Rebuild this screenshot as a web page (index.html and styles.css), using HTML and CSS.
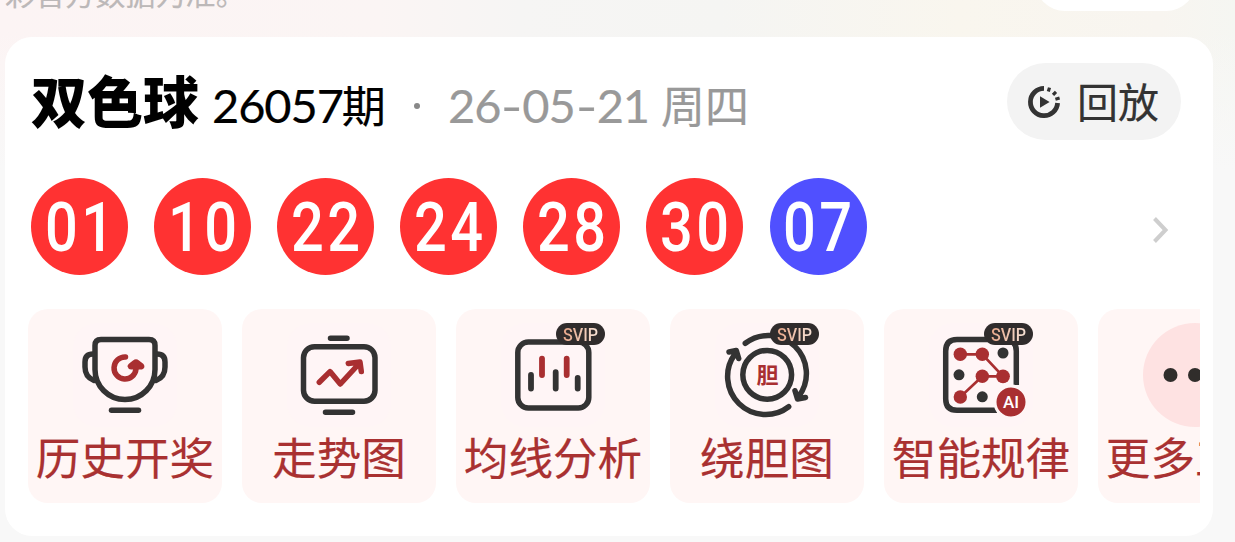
FILE: index.html
```html
<!DOCTYPE html>
<html lang="zh-CN">
<head>
<meta charset="utf-8">
<title>双色球</title>
<link rel="stylesheet" href="styles.css">
</head>
<body>
<div class="page">
  <header class="notice">
    <span class="notice-text">彩官方数据为准。</span>
    <span class="notice-pill"></span>
  </header>
  <main class="card">
    <div class="head">
      <h1 class="title">双色球</h1>
      <span class="issue"><span class="num">26057</span>期</span>
      <span class="dot"></span>
      <span class="date"><span class="num">26<i class="dash">-</i>05<i class="dash">-</i>21</span><span class="week">周四</span></span>
      <button class="replay">
        <svg class="replay-icon" viewBox="0 0 34 34" width="34" height="34">
          <path d="M17 3.400A13.600 13.600 0 1 0 30.600 18" fill="none" stroke="#333" stroke-width="4.800"/>
          <path d="M21.300 6.500 22.500 2.600M26 9.800 29 6.800M28.400 14.200 32.600 13" stroke="#333" stroke-width="3.200"/>
          <path d="M13 11.200v11.600L22.600 17z" fill="#333"/>
        </svg>
        <span class="replay-text">回放</span>
      </button>
    </div>
    <div class="draw">
      <span class="ball"><b>01</b></span>
      <span class="ball"><b>10</b></span>
      <span class="ball"><b>22</b></span>
      <span class="ball"><b>24</b></span>
      <span class="ball"><b>28</b></span>
      <span class="ball"><b>30</b></span>
      <span class="ball blue"><b>07</b></span>
      <svg class="chevron" viewBox="0 0 20 30" width="20" height="30"><path d="M3.500 3.500 14.500 15 3.500 26.500" fill="none" stroke="#cecece" stroke-width="4"/></svg>
    </div>
    <nav class="tiles">
      <a class="tile">
        <svg class="icon" viewBox="0 0 104 104">
          <g class="ink">
            <path d="M28 16.500h48q6 0 6 6V46.500a30 30 0 0 1-60 0V22.500q0-6 6-6z"/>
            <path d="M21 31h-1q-8 0-8 8v5q0 10 9 13.500M83 31h1q8 0 8 8v5q0 10-9 13.500"/>
            <path d="M38.500 87.300h27"/>
          </g>
          <path class="red" d="M52.500 34A11 11 0 1 0 63 46"/>
          <path d="M54.500 43.500Q54 41.500 60 37.500Q63 35 66 37.500L70.500 41q2.500 3.500-1.500 5.500H58q-3-.5-3.500-3z" fill="#a92f31"/>
        </svg>
        <span class="label">历史开奖</span>
      </a>
      <a class="tile">
        <svg class="icon" viewBox="0 0 104 104">
          <g class="ink">
            <rect x="16.500" y="23.700" width="71.500" height="54.500" rx="11"/>
            <path d="M43.500 15.300h16.500M38.500 89.300h27"/>
          </g>
          <path class="red" d="M32.300 59.300 43 48.600 53.300 61 71.300 41.500M61.300 40.500 73 39 74.300 48.600"/>
        </svg>
        <span class="label">走势图</span>
      </a>
      <a class="tile">
        <svg class="icon" viewBox="0 0 104 104">
          <rect class="ink" x="16.800" y="19" width="71" height="66" rx="10.500"/>
          <path class="ink bar" d="M30 52v13.500M54.700 49.200V65.500M76.700 55v10.500"/>
          <path class="red bar" d="M41 35.600v16.500M65.700 35.600v16.500"/>
        </svg>
        <span class="svip"><span class="svip-text">SVIP</span></span>
        <span class="label">均线分析</span>
      </a>
      <a class="tile">
        <svg class="icon" viewBox="0 0 104 104">
          <g class="ink">
            <circle cx="52.200" cy="51.800" r="24.400"/>
            <path d="M30.300 20.300A38 38 0 0 1 84 73M80 67.700 82.500 76 90.500 74.500"/>
            <path d="M73.700 83.700A38 38 0 0 1 20 31M14 29 21.300 27.500 23.700 35.500"/>
          </g>
          <text x="52.400" y="60" text-anchor="middle" class="gall">胆</text>
        </svg>
        <span class="svip"><span class="svip-text">SVIP</span></span>
        <span class="label">绕胆图</span>
      </a>
      <a class="tile">
        <svg class="icon" viewBox="0 0 104 104">
          <path class="ink square" d="M87.300 62V28Q87.300 16.500 76 16.500H28Q16.700 16.500 16.700 28V76Q16.700 87.300 28 87.300H68"/>
          <path d="M31.300 31.300H53.300L74 53.300H53.300L31.300 74" fill="none" stroke="#a92f31" stroke-width="2.700"/>
          <g fill="#a92f31"><circle cx="31.300" cy="31.300" r="6.700"/><circle cx="53.300" cy="31.300" r="6.700"/><circle cx="74" cy="53.300" r="6.900"/><circle cx="53.300" cy="53.300" r="6.700"/><circle cx="31.300" cy="74" r="6.700"/></g>
          <g fill="#333"><circle cx="74" cy="30" r="5.500"/><circle cx="30" cy="51.800" r="5.500"/><circle cx="53.300" cy="73.800" r="5.500"/></g>
          <circle cx="82" cy="79" r="16" fill="#a92f31" stroke="#fff5f5" stroke-width="3"/>
          <text x="82" y="85.200" text-anchor="middle" class="ai">AI</text>
        </svg>
        <span class="svip"><span class="svip-text">SVIP</span></span>
        <span class="label">智能规律</span>
      </a>
      <a class="tile">
        <svg class="icon more" viewBox="0 0 104 104">
          <circle cx="52" cy="52" r="52" fill="#fee2e2"/>
          <g fill="#302d2b"><circle cx="27.500" cy="52" r="7"/><circle cx="52" cy="52" r="7"/><circle cx="76.500" cy="52" r="7"/></g>
        </svg>
        <span class="label">更多工具</span>
      </a>
    </nav>
  </main>
</div>
</body>
</html>
```
FILE: styles.css
```css
* { box-sizing: border-box; }
body {
  margin: 0;
  font-family: "Noto Sans CJK SC", sans-serif;
  background: #f8f8f8;
}
.page {
  width: 1235px;
  height: 542px;
  overflow: hidden;
  background:
    linear-gradient(to bottom, rgba(248,248,248,0) 30px, #f8f8f8 170px),
    linear-gradient(to right, #fcf4f4 0, #fbf5f4 380px, #f6f5f4 520px, #f5f5f3 720px, #f9f6ee 960px, #f8f5f0 1160px, #f5f6f2 1235px);
}
.notice {
  height: 37px;
  display: flex;
  justify-content: space-between;
  align-items: flex-start;
  padding: 0 39px 0 5px;
}
.notice-text {
  margin-top: -23px;
  font-size: 30.1px;
  line-height: 30px;
  color: #bcb8b8;
  -webkit-text-stroke: .2px #bcb8b8;
}
.notice-pill {
  width: 161px;
  height: 60px;
  margin-top: -49px;
  border-radius: 30px;
  background: #fff;
}
.card {
  width: 1208px;
  height: 499px;
  margin-left: 5px;
  padding: 26px 13px 0 23px;
  border-radius: 27px;
  background: #fff;
}
.head {
  height: 77px;
  display: flex;
  align-items: center;
  padding: 0 19px 0 3px;
  white-space: nowrap;
}
.title {
  margin: 0;
  width: 181px;
  padding-bottom: 5px;
  font-size: 56px;
  line-height: 72px;
  font-weight: 900;
  color: #000;
}
.issue, .date {
  display: flex;
  align-items: baseline;
  font-size: 44px;
  line-height: 77px;
  color: #000;
  padding-top: 6px;
  -webkit-text-stroke: .2px currentColor;
}
.num {
  font-family: Lato, sans-serif;
  font-size: 47px;
  letter-spacing: -1.1px;
}
.issue { width: 202px; }
.issue .num { margin-right: -1px; }
.dot {
  width: 6px;
  height: 6px;
  margin: 9px 28px 0 0;
  border-radius: 50%;
  background: #888;
}
.date { color: #999; }
.date .week { margin-left: 12px; }
.dash {
  display: inline-block;
  width: 22px;
  text-align: center;
  font-style: normal;
  transform: scaleX(1.25);
}
.replay {
  width: 174px;
  height: 77px;
  margin-left: auto;
  padding: 0 0 0 20px;
  display: flex;
  align-items: center;
  gap: 16px;
  border: 0;
  border-radius: 39px;
  background: #f3f3f3;
  color: #333;
  font: 41px/75px "Noto Sans CJK SC", sans-serif;
}
.replay-text {
  padding-bottom: 2px;
  -webkit-text-stroke: .2px #333;
}
.replay-icon { flex: none; }
.draw {
  height: 97px;
  margin-top: 38px;
  padding: 0 30px 0 3px;
  display: flex;
  align-items: center;
  gap: 26.1px;
}
.ball {
  width: 97px;
  height: 97px;
  flex: none;
  border-radius: 50%;
  background: #ff3232;
  color: #fff;
  display: flex;
  justify-content: center;
  align-items: center;
}
.ball.blue { background: #5050ff; }
.ball b {
  font: 500 68px/97px Roboto, sans-serif;
  letter-spacing: 4px;
  margin-right: -4px;
  padding-top: 3px;
  transform: translateX(-.5px) scaleX(.85);
}
.chevron { margin: 6px -1px 0 auto; }
.tiles {
  margin-top: 34px;
  display: flex;
  gap: 20px;
  overflow: hidden;
}
.tile {
  position: relative;
  flex: none;
  width: 194px;
  height: 194px;
  padding-top: 14px;
  border-radius: 20px;
  background: #fff6f5;
  display: flex;
  flex-direction: column;
  align-items: center;
}
.icon {
  width: 104px;
  height: 104px;
  flex: none;
  border-radius: 24px;
  background: #fff5f6;
}
.icon.more { background: none; }
.ink, .red {
  fill: none;
  stroke: #333;
  stroke-width: 5.500;
  stroke-linecap: round;
  stroke-linejoin: round;
}
.red { stroke: #a92f31; }
.bar { stroke-width: 5.800; }
.square { stroke-linecap: butt; }
.gall {
  font: 700 22px "Noto Sans CJK SC", sans-serif;
  fill: #a92f31;
}
.ai {
  font: 500 17px Roboto, sans-serif;
  fill: #fff;
}
.svip {
  position: absolute;
  top: 14px;
  left: 100px;
  width: 49px;
  height: 22px;
  border-radius: 11px;
  background: #302c2c;
  display: flex;
  justify-content: center;
}
.svip-text {
  font: 500 19px/23px Roboto, sans-serif;
  transform: scaleX(.85);
  color: transparent;
  background: linear-gradient(100deg, #e5a284, #f8e6da);
  -webkit-background-clip: text;
  background-clip: text;
}
.label {
  margin-top: -1px;
  font-size: 44.6px;
  line-height: 60px;
  white-space: nowrap;
  color: #a93131;
  -webkit-text-stroke: .2px #a93131;
}
```
